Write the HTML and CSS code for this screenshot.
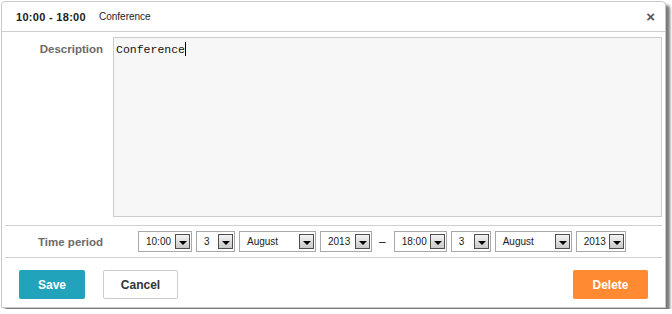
FILE: index.html
```html
<!DOCTYPE html>
<html lang="en">
<head>
  <meta charset="UTF-8" />
  <title>Event - Conference</title>
  <link rel="stylesheet" href="styles.css">
</head>
<body>

  <!-- Event editor dialog -->
  <div class="dialog">
    <div class="dialog-head">
      <span class="head-time">10:00 - 18:00</span>
      <span class="head-title">Conference</span>
      <span class="close-btn">&times;</span>
    </div>

    <div class="row row-desc">
      <label class="row-label">Description</label>
      <div class="desc-box">Conference<span class="caret"></span></div>
    </div>

    <div class="row row-time">
      <label class="row-label">Time period</label>
      <div class="time-fields">
        <div class="pick w-time"><span>10:00</span><span class="pick-btn"></span></div>
        <div class="pick w-day"><span>3</span><span class="pick-btn"></span></div>
        <div class="pick w-month"><span>August</span><span class="pick-btn"></span></div>
        <div class="pick w-year"><span>2013</span><span class="pick-btn"></span></div>
        <span class="dash">&ndash;</span>
        <div class="pick w-time2"><span>18:00</span><span class="pick-btn"></span></div>
        <div class="pick w-day2"><span>3</span><span class="pick-btn"></span></div>
        <div class="pick w-month"><span>August</span><span class="pick-btn"></span></div>
        <div class="pick w-year2"><span>2013</span><span class="pick-btn"></span></div>
      </div>
    </div>

    <div class="dialog-foot">
      <button class="btn save-btn">Save</button>
      <button class="btn cancel-btn">Cancel</button>
      <button class="btn delete-btn">Delete</button>
    </div>
  </div>

</body>
</html>
```

FILE: styles.css
```css
body {
  margin: 0;
  background: #fff;
  font-family: 'Liberation Sans', Arial, sans-serif;
  color: #222;
}

.dialog {
  margin: 1px;
  width: 663px;
  border: 1px solid #c8c8c8;
  border-radius: 4px 4px 0 0;
  box-shadow: 4px 4px 3px #7a7a7a;
  background: #fff;
}

.dialog-head {
  height: 29px;
  border-bottom: 1px solid #cfcfcf;
  display: flex;
  align-items: center;
  padding: 0 10px 0 14px;
  font-size: 11px;
}

.head-time {
  font-weight: bold;
  margin-right: 13px;
  letter-spacing: 0.3px;
}

.head-title {
  font-size: 10px;
}

.close-btn {
  margin-left: auto;
  font-size: 15px;
  font-weight: bold;
  color: #555;
  line-height: 1;
}

.row {
  display: grid;
  grid-template-columns: 98px 1fr;
  column-gap: 10px;
  margin: 0 3px;
}

.row-label {
  text-align: right;
  font-size: 11.5px;
  font-weight: bold;
  color: #6b6b6b;
}

.row-desc {
  padding: 5px 0 8px;
  border-bottom: 1px solid #cfcfcf;
}

.row-desc .row-label {
  padding-top: 6px;
}

.desc-box {
  height: 180px;
  box-sizing: border-box;
  border: 1px solid #cccccc;
  background: #f7f7f7;
  font-family: 'Liberation Mono', 'Courier New', monospace;
  font-size: 11.5px;
  color: #111;
  padding: 4px 2px;
}

.caret {
  display: inline-block;
  width: 1px;
  height: 14px;
  background: #000;
  vertical-align: -3px;
}

.row-time {
  height: 31px;
  align-items: center;
  border-bottom: 1px solid #cfcfcf;
}

.time-fields {
  display: flex;
  align-items: center;
  gap: 4px;
  padding-left: 25px;
}

.pick {
  height: 21px;
  box-sizing: border-box;
  border: 1px solid #a9a9a9;
  display: flex;
  align-items: center;
  justify-content: space-between;
  padding: 0 1px 0 7px;
  font-size: 10px;
  color: #222;
}

.w-time { width: 54px; }
.w-day { width: 39px; }
.w-month { width: 77px; }
.w-year { width: 52px; }
.w-time2 { width: 53px; }
.w-day2 { width: 40px; }
.w-year2 { width: 50px; }

.pick-btn {
  width: 15px;
  height: 15px;
  box-sizing: border-box;
  border: 1px solid #4e4e4e;
  background: linear-gradient(#f4f4f4, #c9c9c9);
  position: relative;
}

.pick-btn::after {
  content: '';
  position: absolute;
  left: 3px;
  top: 6px;
  border-left: 4px solid transparent;
  border-right: 4px solid transparent;
  border-top: 4px solid #000;
}

.dash {
  font-size: 12px;
  color: #222;
  margin: 0 4px 0 3px;
}

.dialog-foot {
  display: flex;
  align-items: flex-start;
  padding: 12px 17px 8px;
}

.btn {
  height: 29px;
  border: none;
  border-radius: 2px;
  font-family: 'Liberation Sans', Arial, sans-serif;
  font-size: 12px;
  font-weight: bold;
  cursor: pointer;
}

.save-btn {
  width: 66px;
  background: #21a3bc;
  color: #fff;
}

.cancel-btn {
  width: 75px;
  margin-left: 18px;
  background: #fff;
  color: #333;
  border: 1px solid #cccccc;
}

.delete-btn {
  width: 75px;
  margin-left: auto;
  background: #ff8a31;
  color: #fff;
}
```
